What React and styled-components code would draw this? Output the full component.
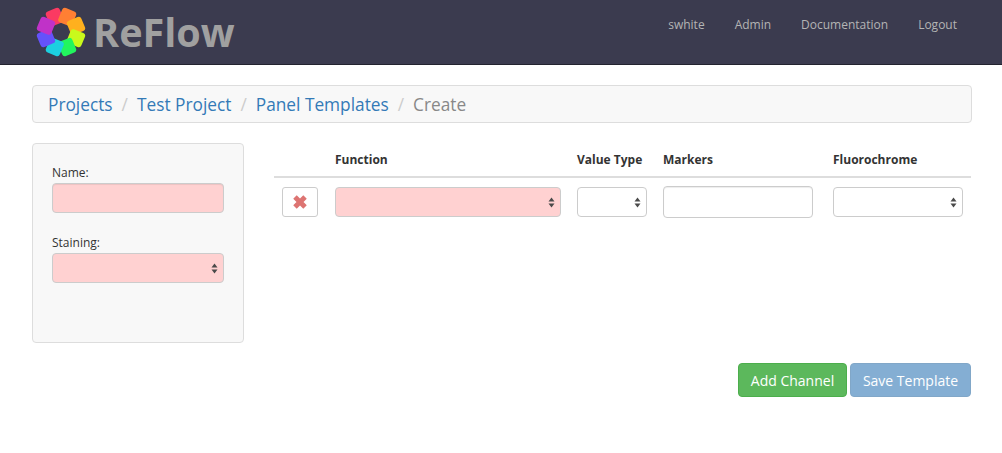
import React from "react";
import styled, { createGlobalStyle } from "styled-components";

const Global = createGlobalStyle`
  html, body { margin: 0; padding: 0; background: #fff; }
  body { font-family: "Open Sans", "Liberation Sans", sans-serif; font-size: 12px; color: #333; }
  * { box-sizing: border-box; }
`;

const Nav = styled.header`
  height: 65px;
  background: #3b3b4f;
  border-bottom: 1px solid #23232f;
  display: flex;
  justify-content: space-between;
  padding: 0 45px 0 36px;
`;
const Brand = styled.a`
  display: flex;
  align-items: center;
  gap: 8px;
  height: 64px;
`;
const BrandText = styled.span`
  font-size: 39.6px;
  font-weight: 700;
  color: #a0a0a0;
  line-height: 64px;
  margin-left: -1px;
`;
const NavLinks = styled.nav`
  display: flex;
  gap: 30px;
  padding-top: 16px;
`;
const NavLink = styled.a`
  font-size: 12px;
  line-height: 18px;
  color: #b4b4b4;
`;
const Main = styled.main`
  padding: 20px 30px 0 32px;
`;
const Crumbs = styled.ol`
  list-style: none;
  margin: 0 0 20px;
  height: 38px;
  padding: 1px 15px 0;
  display: flex;
  align-items: center;
  background: #f8f8f8;
  border: 1px solid #ddd;
  border-radius: 4px;
  font-size: 17.3px;
  line-height: 24px;
`;
const Crumb = styled.li`
  color: ${(p) => (p.$active ? "#888" : "#337ab7")};
  &:not(:first-child)::before {
    content: "/";
    color: #ccc;
    padding: 0 9px;
  }
`;
const Content = styled.div`
  display: flex;
  gap: 30px;
  align-items: flex-start;
`;
const Panel = styled.aside`
  width: 212px;
  height: 200px;
  flex: none;
  background: #f8f8f8;
  border: 1px solid #ddd;
  border-radius: 4px;
  padding: 20px 19px;
`;
const Field = styled.div`
  margin-bottom: 21px;
`;
const Label = styled.label`
  display: block;
  font-size: 12px;
  line-height: 18px;
  margin-bottom: 1px;
  color: #333;
`;
const TextInput = styled.input`
  display: block;
  width: ${(p) => p.$w || "100%"};
  height: ${(p) => p.$h || "30px"};
  background: ${(p) => (p.$invalid ? "#ffd1d1" : "#fff")};
  border: 1px solid #ccc;
  border-radius: 4px;
  box-shadow: inset 0 1px 1px rgba(0, 0, 0, 0.075);
  outline: none;
`;
const SelectWrap = styled.div`
  position: relative;
  width: ${(p) => p.$w || "100%"};
  height: 30px;
`;
const NativeSelect = styled.select`
  appearance: none;
  display: block;
  width: 100%;
  height: 100%;
  background: ${(p) => (p.$invalid ? "#ffd1d1" : "#fff")};
  border: 1px solid #ccc;
  border-radius: 4px;
  outline: none;
`;
const Arrows = styled.svg`
  position: absolute;
  right: 6px;
  top: 10px;
  width: 7px;
  height: 11px;
  pointer-events: none;
`;
const Board = styled.section`
  flex: 1;
`;
const Grid = styled.div`
  display: grid;
  grid-template-columns: 53px 242px 86px 170px 146px;
`;
const Head = styled.div`
  height: 35px;
  padding: 8px 8px 0;
  font-size: 12px;
  font-weight: 700;
  line-height: 18px;
  color: #333;
  border-bottom: 2px solid #ddd;
`;
const Cell = styled.div`
  padding: ${(p) => (p.$input ? "8px" : "9px")} 8px 0;
  height: 49px;
`;
const IconButton = styled.button`
  width: 36px;
  height: 30px;
  padding: 0;
  display: flex;
  align-items: center;
  justify-content: center;
  background: #fff;
  border: 1px solid #ccc;
  border-radius: 3px;
`;
const Spacer = styled.div`
  height: 116px;
`;
const Actions = styled.div`
  display: flex;
  justify-content: flex-end;
  gap: 3px;
  margin-top: 20px;
  padding-right: 1px;
`;
const Button = styled.button`
  height: 34px;
  width: ${(p) => p.$w};
  padding: 0;
  border: 1px solid ${(p) => (p.$variant === "green" ? "#4cae4c" : "#2e6da4")};
  border-radius: 4px;
  background: ${(p) => (p.$variant === "green" ? "#5cb85c" : "#337ab7")};
  color: #fff;
  font-family: inherit;
  font-size: 14px;
  opacity: ${(p) => (p.$disabled ? 0.6 : 1)};
`;

const ArrowIcon = () => (
  <Arrows viewBox="0 0 7 11">
    <path d="M3.5 0.5 L6.5 4.5 H0.5 Z M0.5 6.5 H6.5 L3.5 10.5 Z" fill="#4a4a4a" />
  </Arrows>
);
const Select = ({ w, invalid }) => (
  <SelectWrap $w={w}>
    <NativeSelect $invalid={invalid} />
    <ArrowIcon />
  </SelectWrap>
);

const petals = ["#fb3a62", "#ff7f33", "#ffb01e", "#c9f91c", "#22f55e", "#1cd0e0", "#6452fb", "#c032c8"];
const Logo = () => (
  <svg width="50" height="50" viewBox="-25 -25 50 50">
    {petals.map((c, i) => (
      <rect
        key={c}
        x="-7.5"
        y="-24"
        width="15"
        height="15.5"
        rx="3"
        fill={c}
        transform={`rotate(${i * 45 - 22.5})`}
      />
    ))}
  </svg>
);

export default function App() {
  return (
    <>
      <Global />
      <Nav>
        <Brand>
          <Logo />
          <BrandText>ReFlow</BrandText>
        </Brand>
        <NavLinks>
          <NavLink>swhite</NavLink>
          <NavLink>Admin</NavLink>
          <NavLink>Documentation</NavLink>
          <NavLink>Logout</NavLink>
        </NavLinks>
      </Nav>
      <Main>
        <Crumbs>
          <Crumb>Projects</Crumb>
          <Crumb>Test Project</Crumb>
          <Crumb>Panel Templates</Crumb>
          <Crumb $active>Create</Crumb>
        </Crumbs>
        <Content>
          <Panel>
            <Field>
              <Label>Name:</Label>
              <TextInput $invalid />
            </Field>
            <Field>
              <Label>Staining:</Label>
              <Select invalid />
            </Field>
          </Panel>
          <Board>
            <Grid>
              <Head />
              <Head>Function</Head>
              <Head>Value Type</Head>
              <Head>Markers</Head>
              <Head>Fluorochrome</Head>
              <Cell>
                <IconButton aria-label="Remove">
                  <svg width="14" height="14" viewBox="0 0 12 12">
                    <path d="M3.2 0.2 L6 3 L8.8 0.2 L11.8 3.2 L9 6 L11.8 8.8 L8.8 11.8 L6 9 L3.2 11.8 L0.2 8.8 L3 6 L0.2 3.2 Z" fill="#dd7472" />
                  </svg>
                </IconButton>
              </Cell>
              <Cell><Select invalid w="226px" /></Cell>
              <Cell><Select w="70px" /></Cell>
              <Cell $input><TextInput $w="150px" $h="32px" /></Cell>
              <Cell><Select w="130px" /></Cell>
            </Grid>
            <Spacer />
            <Actions>
              <Button $variant="green" $w="109px">Add Channel</Button>
              <Button $disabled $w="121px">Save Template</Button>
            </Actions>
          </Board>
        </Content>
      </Main>
    </>
  );
}
